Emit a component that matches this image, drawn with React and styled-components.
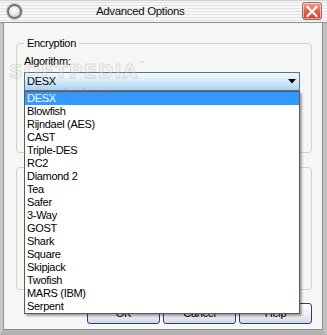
import React from 'react';
import styled, { createGlobalStyle } from 'styled-components';

const Global = createGlobalStyle`
  html, body { margin: 0; padding: 0; background: #ffffff; }
  body { font-family: "Liberation Sans", Arial, sans-serif; }
`;

const Window = styled.div`
  position: relative;
  width: 327px;
  height: 335px;
  display: flex;
  flex-direction: column;
  overflow: hidden;
  font-family: "Liberation Sans", Arial, sans-serif;
  font-size: 11px;
  letter-spacing: -0.3px;
  color: #000;
`;

const TitleBar = styled.div`
  flex: none;
  height: 22px;
  display: flex;
  align-items: center;
  padding: 0 5px 0 7px;
  background: repeating-linear-gradient(to bottom, #f7f7f7 0px, #f7f7f7 2px, #e3e3e3 2px, #e3e3e3 3px);
  border-bottom: 1px solid #8e8e8e;
  box-shadow: inset 0 1px #d0d0d0;
`;

const Knob = styled.div`
  flex: none;
  width: 11px;
  height: 11px;
  border-radius: 50%;
  border: 2px solid #707070;
  background: radial-gradient(circle at 45% 35%, #ffffff 0%, #e6e6e6 50%, #b8b8b8 100%);
  box-shadow: 0 0 0 1px #c8c8c8;
`;

const Title = styled.div`
  flex: 1;
  padding-left: 74px;
  font-size: 11.5px;
  letter-spacing: -0.35px;
  line-height: 22px;
  color: #111;
`;

const CloseButton = styled.div`
  flex: none;
  width: 20px;
  height: 18px;
  box-sizing: border-box;
  border-radius: 3px;
  border: 1px solid #9a6a60;
  background: linear-gradient(to bottom, #eea392 0%, #de6a52 45%, #c9402a 100%);
  box-shadow: inset 0 0 0 1px rgba(255, 255, 255, 0.55);
  display: flex;
  align-items: center;
  justify-content: center;
`;

const Body = styled.div`
  flex: 1;
  display: flex;
  flex-direction: column;
  background: #f6f6f4;
  border-left: 3px solid #c8c8c8;
  border-right: 4px solid #c2c2c2;
  border-bottom: 5px solid #b2b2b2;
  box-shadow: inset 1px 0 #8c8c8c, inset -1px 0 #8c8c8c, inset 0 -1px #8c8c8c;
  padding: 20px 11px 6px 13px;
`;

const GroupBox = styled.div`
  flex: none;
  height: ${(p) => p.$h}px;
  box-sizing: border-box;
  margin-top: ${(p) => p.$mt || 0}px;
  border: 1px solid #d2d2c8;
  border-radius: 4px;
  padding: 0 11px 0 7px;
  display: flex;
  flex-direction: column;
`;

const Legend = styled.div`
  align-self: flex-start;
  margin-top: -7px;
  padding: 0 3px;
  line-height: 13px;
  background: #f6f6f4;
`;

const Label = styled.div`
  margin-top: 5px;
  line-height: 13px;
`;

const ComboWrap = styled.div`
  position: relative;
  margin-top: 4px;
`;

const Combo = styled.div`
  height: 19px;
  box-sizing: border-box;
  border: 1px solid #4d7698;
  background: linear-gradient(to bottom, #f4f9fd 0%, #d8ebf8 45%, #a9d2ef 100%);
  display: flex;
  align-items: center;
  justify-content: space-between;
  padding: 0 3px 0 2px;
  line-height: 13px;
`;

const List = styled.div`
  position: absolute;
  top: 100%;
  left: 0;
  right: 0;
  z-index: 5;
  background: #ffffff;
  border: 1px solid #5a5a5a;
  box-shadow: 2px 2px 2px rgba(0, 0, 0, 0.35);
`;

const Item = styled.div`
  height: 13px;
  line-height: 13px;
  padding-left: 2px;
  background: ${(p) => (p.$selected ? '#3399ff' : 'transparent')};
  color: ${(p) => (p.$selected ? '#ffffff' : '#000000')};
`;

const ButtonRow = styled.div`
  margin-top: 13px;
  display: flex;
  justify-content: flex-end;
  gap: 3px;
  padding-right: 0;
`;

const Button = styled.div`
  width: 73px;
  height: 21px;
  box-sizing: border-box;
  border: 1px solid #22426e;
  border-radius: 3px;
  background: linear-gradient(to bottom, #ffffff 0%, #eeeef4 60%, #d6d6e4 100%);
  display: flex;
  align-items: center;
  justify-content: center;
  line-height: 13px;
`;

const Watermark = styled.div`
  position: absolute;
  left: 9px;
  top: 60px;
  z-index: 10;
  pointer-events: none;
  font-family: "DejaVu Sans", sans-serif;
  font-weight: bold;
  font-size: 19px;
  letter-spacing: 1px;
  color: rgba(235, 235, 235, 0.25);
  -webkit-text-stroke: 1px rgba(150, 150, 150, 0.28);
`;

const Tm = styled.span`
  font-size: 7px;
  vertical-align: top;
  -webkit-text-stroke: 0;
  color: rgba(150, 150, 150, 0.4);
`;

const WatermarkUrl = styled.div`
  position: absolute;
  left: 28px;
  top: 87px;
  z-index: 10;
  pointer-events: none;
  font-size: 10px;
  letter-spacing: 0;
  color: rgba(120, 120, 140, 0.35);
`;

const items = [
  'DESX', 'Blowfish', 'Rijndael (AES)', 'CAST', 'Triple-DES', 'RC2', 'Diamond 2',
  'Tea', 'Safer', '3-Way', 'GOST', 'Shark', 'Square', 'Skipjack', 'Twofish',
  'MARS (IBM)', 'Serpent',
];

export default function App() {
  return (
    <>
      <Global />
      <Window>
        <TitleBar>
          <Knob />
          <Title>Advanced Options</Title>
          <CloseButton>
            <svg width="12" height="11" viewBox="0 0 12 11">
              <path d="M1.5 1 L10.5 10 M10.5 1 L1.5 10" stroke="#ffffff" strokeWidth="2.2" strokeLinecap="round" />
            </svg>
          </CloseButton>
        </TitleBar>
        <Body>
          <GroupBox $h={110}>
            <Legend>Encryption</Legend>
            <Label>Algorithm:</Label>
            <ComboWrap>
              <Combo>
                <span>DESX</span>
                <svg width="8" height="5" viewBox="0 0 8 5">
                  <path d="M0 0 H8 L4 4.5 Z" fill="#000" />
                </svg>
              </Combo>
              <List>
                {items.map((it, i) => (
                  <Item key={it} $selected={i === 0}>{it}</Item>
                ))}
              </List>
            </ComboWrap>
          </GroupBox>
          <GroupBox $h={123} $mt={14} />
          <ButtonRow>
            <Button>OK</Button>
            <Button>Cancel</Button>
            <Button>Help</Button>
          </ButtonRow>
        </Body>
        <Watermark>SOFTPEDIA<Tm>™</Tm></Watermark>
        <WatermarkUrl>www.softpedia.com</WatermarkUrl>
      </Window>
    </>
  );
}
